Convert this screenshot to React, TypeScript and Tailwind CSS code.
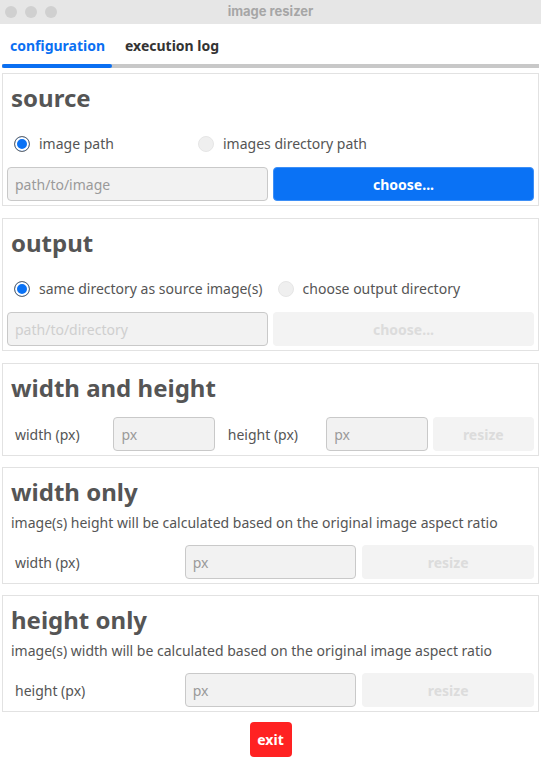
import React from "react";

const font = { fontFamily: '"Noto Sans", "Open Sans", sans-serif' };

function Radio({ checked, label }: { checked: boolean; label: string }) {
  return (
    <div className="flex items-center">
      {checked ? (
        <span className="block w-4 h-4 rounded-full border border-[#6a6a6a] bg-[#0a72f5] shadow-[inset_0_0_0_2px_#ffffff]" />
      ) : (
        <span className="block w-4 h-4 rounded-full border border-[#e6e6e6] bg-[#efefef]" />
      )}
      <span className="ml-[9px] text-[14px] leading-[20px] text-[#555555]">{label}</span>
    </div>
  );
}

function Input({ placeholder, disabled }: { placeholder: string; disabled?: boolean }) {
  return (
    <div
      className={
        "h-[34px] rounded-[4px] border border-[#c9c9c9] bg-[#f2f2f2] flex items-center pl-[7px] text-[14px] " +
        (disabled ? "text-[#cfcfcf]" : "text-[#9a9a9a]")
      }
    >
      {placeholder}
    </div>
  );
}

function Btn({ label, primary }: { label: string; primary?: boolean }) {
  return primary ? (
    <div className="h-[34px] rounded-[4px] bg-[#0a72f5] border border-[#3d8ff7] flex items-center justify-center text-white font-bold text-[14px]">
      {label}
    </div>
  ) : (
    <div className="h-[34px] rounded-[4px] bg-[#f3f3f3] flex items-center justify-center text-[#dcdcdc] font-bold text-[14px]">
      {label}
    </div>
  );
}

function Panel({ children, className }: { children: React.ReactNode; className?: string }) {
  return (
    <div className={"mx-[2px] border border-[#e2e2e2] px-[4px] pt-[8px] pb-[4px] " + (className || "")}>
      {children}
    </div>
  );
}

function Title({ children }: { children: React.ReactNode }) {
  return <div className="h-[32px] leading-[32px] text-[24px] font-bold text-[#555555] pl-[4px]">{children}</div>;
}

export default function App() {
  return (
    <div className="w-[541px] h-[763px] bg-white overflow-hidden" style={font}>
      {/* title bar */}
      <div className="relative h-[24px] bg-[#e6e6e6] flex items-center">
        <div className="flex gap-[8px] pl-[5px]">
          <span className="block w-[12px] h-[12px] rounded-full bg-[#d0d0d0]" />
          <span className="block w-[12px] h-[12px] rounded-full bg-[#d0d0d0]" />
          <span className="block w-[12px] h-[12px] rounded-full bg-[#d0d0d0]" />
        </div>
        <div
          className="absolute inset-0 flex items-center justify-center text-[13px] font-bold text-[#a6a6a6]"
          style={{ fontFamily: 'Inter, "Liberation Sans", sans-serif' }}
        >
          image resizer
        </div>
      </div>

      {/* tabs */}
      <div className="mx-[2px]">
        <div className="flex pt-[12px] pb-[9px] text-[14px] leading-[19px] font-bold">
          <div className="w-[110px] pl-[8px] text-[#0a6ff2]">configuration</div>
          <div className="pl-[13px] text-[#333333]">execution log</div>
        </div>
        <div className="relative h-[4px] bg-[#c8c8c8]">
          <div className="absolute left-0 top-0 h-[4px] w-[110px] rounded-full bg-[#0a6ff2]" />
        </div>
      </div>

      {/* source */}
      <Panel className="mt-[5px]">
        <Title>source</Title>
        <div className="mt-[20px] h-[20px] flex items-center pl-[7px]">
          <div className="w-[184px]">
            <Radio checked label="image path" />
          </div>
          <Radio checked={false} label="images directory path" />
        </div>
        <div className="mt-[13px] grid grid-cols-2 gap-[5px]">
          <Input placeholder="path/to/image" />
          <Btn label="choose..." primary />
        </div>
      </Panel>

      {/* output */}
      <Panel className="mt-[12px]">
        <Title>output</Title>
        <div className="mt-[20px] h-[20px] flex items-center pl-[7px]">
          <div className="pr-[15px]">
            <Radio checked label="same directory as source image(s)" />
          </div>
          <Radio checked={false} label="choose output directory" />
        </div>
        <div className="mt-[13px] grid grid-cols-2 gap-[5px]">
          <Input placeholder="path/to/directory" disabled />
          <Btn label="choose..." />
        </div>
      </Panel>

      {/* width and height */}
      <Panel className="mt-[12px]">
        <Title>width and height</Title>
        <div className="mt-[13px] grid grid-cols-5 gap-[5px] items-center">
          <div className="pl-[8px] text-[14px] text-[#555555]">width (px)</div>
          <Input placeholder="px" />
          <div className="pl-[8px] text-[14px] text-[#555555]">height (px)</div>
          <Input placeholder="px" />
          <Btn label="resize" />
        </div>
      </Panel>

      {/* width only */}
      <Panel className="mt-[11px]">
        <Title>width only</Title>
        <div className="mt-[5px] pl-[4px] text-[14px] leading-[19px] text-[#555555]">
          image(s) height will be calculated based on the original image aspect ratio
        </div>
        <div className="mt-[13px] grid grid-cols-3 gap-[6px] items-center">
          <div className="pl-[8px] text-[14px] text-[#555555]">width (px)</div>
          <Input placeholder="px" />
          <Btn label="resize" />
        </div>
      </Panel>

      {/* height only */}
      <Panel className="mt-[11px]">
        <Title>height only</Title>
        <div className="mt-[5px] pl-[4px] text-[14px] leading-[19px] text-[#555555]">
          image(s) width will be calculated based on the original image aspect ratio
        </div>
        <div className="mt-[13px] grid grid-cols-3 gap-[6px] items-center">
          <div className="pl-[8px] text-[14px] text-[#555555]">height (px)</div>
          <Input placeholder="px" />
          <Btn label="resize" />
        </div>
      </Panel>

      <div className="mt-[10px] flex justify-center">
        <div className="w-[42px] h-[35px] rounded-[4px] bg-[#ff2222] flex items-center justify-center text-white font-bold text-[14px]">
          exit
        </div>
      </div>
    </div>
  );
}
